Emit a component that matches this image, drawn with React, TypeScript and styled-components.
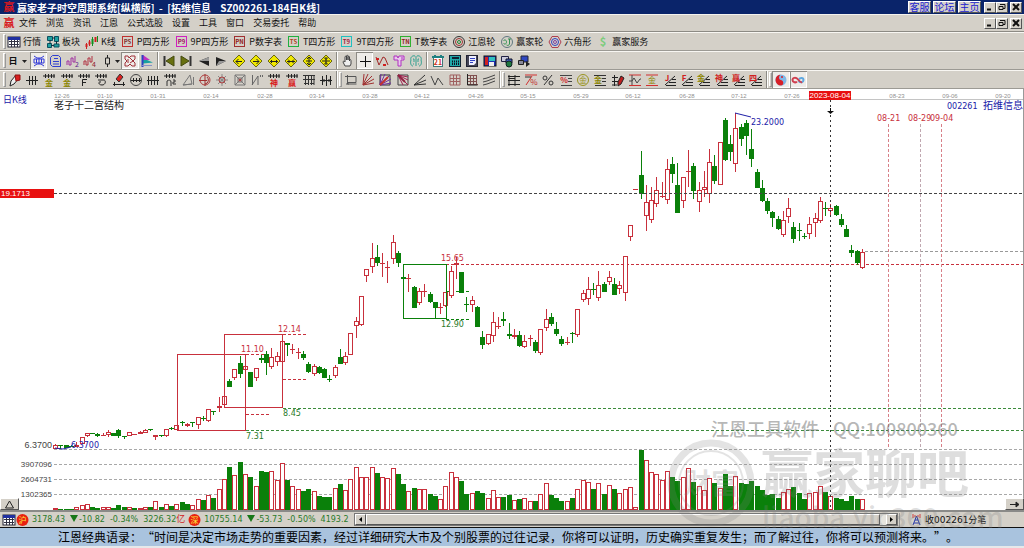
import React from "react";
import styled, { createGlobalStyle, css } from "styled-components";

const UI = '"Noto Sans CJK SC", "Liberation Sans", sans-serif';
const NUM = '"DejaVu Sans", "Noto Sans CJK SC", sans-serif';
const FACE = "#d4d0c8";
const RED = "#c8303c";
const GREEN = "#0a800a";
const BLUE = "#2020a8";

const GlobalStyle = createGlobalStyle`
  * { box-sizing: border-box; }
  body { margin: 0; background: #fff; font-family: ${UI}; color: #111; }
  button { font: inherit; color: inherit; padding: 0; margin: 0; border: 0; background: none; }
`;

const Window = styled.div`
  position: relative;
  width: 100%;
  overflow: hidden;
  background: #e6e8ea;
`;

const TitleBar = styled.header`
  display: flex;
  align-items: center;
  height: 14px;
  padding: 0 2px 0 3px;
  gap: 2px;
  background: #0a246a;
  color: #fff;
`;

const Title = styled.h1`
  flex: 1;
  margin: 0;
  font-size: 10px;
  line-height: 13px;
  font-weight: 700;
  white-space: pre;
`;

const raised = css`
  background: ${FACE};
  border: 1px solid;
  border-color: #fff #555 #555 #fff;
`;

const TitleLink = styled.a`
  ${raised}
  width: 23px;
  height: 12px;
  font-size: 10px;
  line-height: 10px;
  text-align: center;
  text-decoration: none;
  color: #2020d0;
`;

const WindowButtons = styled.div`
  display: flex;
  margin-left: 1px;
`;

const WindowButton = styled.button<{ $apart?: boolean }>`
  ${raised}
  display: flex;
  align-items: center;
  justify-content: center;
  width: 12px;
  height: 11px;
  margin-left: ${(p) => (p.$apart ? 2 : 0)}px;
`;

const MenuBar = styled.nav`
  display: flex;
  align-items: center;
  height: 18px;
  padding: 0 2px 0 3px;
  background: ${FACE};
  border-top: 1px solid #f4f2ee;
  border-bottom: 1px solid #8c8a84;
`;

const MenuItems = styled.div`
  display: flex;
  flex: 1;
  gap: 9px;
  padding-left: 4px;
`;

const MenuItem = styled.button`
  font-size: 9px;
  line-height: 14px;
  white-space: nowrap;
`;

const Toolbar = styled.div`
  display: flex;
  align-items: center;
  height: 19px;
  padding-left: 3px;
  background: ${FACE};
  border-top: 1px solid #f8f6f2;
  border-bottom: 1px solid #9c9a94;
`;

const Grip = styled.span`
  flex: none;
  width: 3px;
  height: 15px;
  border: 1px solid;
  border-color: #fff #999 #999 #fff;
`;

const Divider = styled.span`
  flex: none;
  width: 2px;
  height: 17px;
  margin: 0 1px;
  border-left: 1px solid #8c8a84;
  border-right: 1px solid #fff;
`;

const Group = styled.div<{ $width: number }>`
  display: flex;
  flex: 0 0 ${(p) => p.$width}px;
`;

const ToolButton = styled.button<{ $on?: boolean }>`
  display: flex;
  flex: 1;
  align-items: center;
  justify-content: center;
  height: 17px;
  ${(p) =>
    p.$on &&
    css`
      background: #eeece8;
      box-shadow: inset 1px 1px #8c8a84, inset -1px -1px #fff;
    `}
`;

const PeriodButton = styled.button`
  display: flex;
  align-items: center;
  justify-content: center;
  gap: 4px;
  width: 24px;
  font-size: 9px;
  line-height: 14px;
  font-weight: 700;
`;

const LinkRow = styled.div`
  display: flex;
  gap: 5px;
  padding-left: 1px;
`;

const TextTool = styled.button`
  display: flex;
  align-items: center;
  gap: 2px;
  font-size: 9px;
  line-height: 14px;
  white-space: nowrap;
`;

const ChartArea = styled.main`
  position: relative;
  background: #fff;
  border-bottom: 2px solid #8a8a88;
`;

const ChartSvg = styled.svg`
  display: block;
  width: 100%;
  height: auto;
  font-family: ${NUM};
  font-size: 8px;
`;

const CornerButton = styled.button<{ $side: "left" | "right" }>`
  ${raised}
  position: absolute;
  bottom: 0;
  ${(p) => p.$side}: 0;
  display: flex;
  align-items: center;
  justify-content: center;
  width: 19px;
  height: 12px;
`;

const StatusBar = styled.footer`
  display: flex;
  align-items: center;
  height: 16px;
  padding-left: 2px;
  background: ${FACE};
  border-bottom: 1px solid #111;
`;

const Quotes = styled.div`
  display: flex;
  align-items: center;
  flex: none;
  width: 351px;
  overflow: hidden;
  font-family: ${NUM};
  font-size: 8px;
  line-height: 14px;
  color: #2a7a2a;
  white-space: nowrap;
`;

const Quote = styled.span`
  display: flex;
  align-items: center;
  gap: 5px;
  margin: 0 3px;
`;

const Unit = styled.span`
  font-size: 9px;
  color: #d02020;
`;

const Scroller = styled.div`
  display: flex;
  flex: 1;
  height: 13px;
  margin-left: 1px;
  border: 1px solid #777;
  background: #e6e4de;
`;

const Arrow = styled.button`
  ${raised}
  display: flex;
  align-items: center;
  justify-content: center;
  width: 11px;
`;

const Thumb = styled.div`
  ${raised}
  flex: 1;
  margin-right: 6px;
`;

const TickInfo = styled.div`
  display: flex;
  align-items: center;
  gap: 3px;
  flex: 0 0 125px;
  height: 14px;
  margin-left: 1px;
  padding-left: 11px;
  border-left: 1px solid #999;
  font-family: ${NUM};
  font-size: 9px;
  line-height: 14px;
`;

const Saying = styled.p`
  margin: 0 0 2px;
  padding-left: 58px;
  background: #a9c3de;
  font-size: 12px;
  line-height: 18px;
  color: #000;
  white-space: nowrap;
  text-spacing-trim: space-all;
`;

const Watermark = styled.svg`
  position: absolute;
  right: 0;
  bottom: 10px;
  width: 360px;
  height: 122px;
  pointer-events: none;
  font-family: "Noto Sans CJK SC", sans-serif;
`;

const IconSvg = styled.svg`
  flex: none;
  overflow: visible;
`;

const TrendMark = styled.svg`
  margin-right: 1px;
`;

const Icon = ({ children, w = 14 }: { children?: React.ReactNode; w?: number }) => (
  <IconSvg width={w} height={14} viewBox={`0 0 ${w} 14`} fill="none" stroke="#222" aria-hidden="true">
    {children}
  </IconSvg>
);

const Tiny = ({ x = 7, y = 13, fill = "#222", size = 8, bold, children }: any) => (
  <text x={x} y={y} fill={fill} stroke="none" fontSize={size} fontWeight={bold ? 700 : 400} textAnchor="middle" fontFamily={UI}>
    {children}
  </text>
);

const Boxed = ({ label, edge, ink }: { label: string; edge: string; ink: string }) => (
  <Icon>
    <rect x="1.5" y="1.5" width="10" height="10" stroke={edge} />
    <Tiny x={6.5} y={9} size={6} fill={ink} bold>{label}</Tiny>
  </Icon>
);

const Logo = () => (
  <Icon w={12}>
    <Tiny x={6} y={11} size={11} fill="#d81820" bold>赢</Tiny>
  </Icon>
);

const textTools: [string, React.ReactNode][] = [
  ["行情", <Icon><rect x="1" y="2" width="12" height="10" fill="#fff" stroke="#223" /><path d="M1 3.500h12" stroke="#2030a0" strokeWidth="3" /><path d="M2 6.500h10M2 9.500h10M4.500 5v7M7.500 5v7M10.500 5v7" stroke="#334" /></Icon>],
  ["板块", <Icon><path d="M1.500 1.500h5v4h-5zM8.500 1.500h4v5h-4zM1.500 8.500h4v4h-4zM8 9h5v3H8z" fill="#20a0a0" stroke="#0a5060" /><path d="M4 5v4M6 3h3M10.500 6v3M5 10.500h3" stroke="#103040" /></Icon>],
  ["K线", <Icon><path d="M1.500 8v6M4.500 5v6" stroke="#d02020" /><path d="M1.500 9v3M4.500 6.500v3M10.500 2v5" stroke="#d02020" strokeWidth="2" /><path d="M7.500 4v5" stroke="#109020" strokeWidth="2" /><path d="M7.500 2v9M12.500 1v6" stroke="#109020" /></Icon>],
  ["P四方形", <Boxed label="PS" edge="#c03030" ink="#803030" />],
  ["9P四方形", <Boxed label="P9" edge="#d020c0" ink="#a01060" />],
  ["P数字表", <Boxed label="PN" edge="#a03030" ink="#901818" />],
  ["T四方形", <Boxed label="TS" edge="#20b040" ink="#b04020" />],
  ["9T四方形", <Boxed label="T9" edge="#20c0c0" ink="#a02040" />],
  ["T数字表", <Boxed label="TN" edge="#30b030" ink="#902020" />],
  ["江恩轮", <Icon><circle cx="7" cy="7" r="5.500" stroke="#333" /><circle cx="7" cy="7" r="3.500" stroke="#a03030" /><circle cx="7" cy="7" r="1.500" stroke="#208030" /></Icon>],
  ["赢家轮", <Icon><circle cx="7" cy="7" r="5.500" stroke="#607880" /><path d="M3.500 6c1-2 3-1 3 1s-2 3-3 1M8 4h3M9.500 4v5c0 1-2 2-3 1" stroke="#309050" /></Icon>],
  ["六角形", <Icon><path d="M4 1.500h6l3 5.500-3 5.500H4L1 7z" stroke="#b04050" /><circle cx="7" cy="7" r="3.500" stroke="#3040c0" /><circle cx="7" cy="7" r="1.500" stroke="#8040a0" /></Icon>],
  ["赢家服务", <Icon><Tiny x={7} y={11} size={11} fill="#7ccc7c" bold>$</Tiny></Icon>],
];

const Diamond = ({ d }: { d: string }) => (
  <Icon>
    <path d="M7 1l6 6-6 6-6-6z" fill="#f0e800" stroke="#6a6810" />
    <path d={d} stroke="#222" />
  </Icon>
);

const TriangleDown = () => (
  <Icon w={6}><path d="M0 6h5L2.500 9z" fill="#222" stroke="none" /></Icon>
);

type Tool = [string, React.ReactNode, boolean?];

const viewTools: Tool[] = [
  ["综合视图", <Icon><path d="M2 2l3 2h4l3-2M2 12l3-2h4l3 2M2 5h10v4H2zM4.500 5v4M9.500 5v4M7 4v6" stroke="#3038d8" /></Icon>, true],
  ["资料", <Icon><path d="M3.500 1.500h6l2 2v9h-8l-2-2v-7zM5 4.500h4M4 7.500h6M4 10h6" stroke="#3040d0" /></Icon>],
  ["二线", <Icon><path d="M1 11V7h2v4h2V4h2v4h2V2" stroke="#a030a0" /><Tiny x={11} y={13} size={7} fill="#602090">2</Tiny></Icon>],
  ["四线", <Icon><path d="M1 11V7h2v4h2V4h2v4h2V2" stroke="#b03040" /><Tiny x={11} y={13} size={7} fill="#902030">4</Tiny></Icon>],
  ["单根K线", <Icon><path d="M7.500 1v3M7.500 10v3M5.500 4h4v6h-4z" /></Icon>],
];
const viewTools2: Tool[] = [
  ["形态", <Icon><path d="M2 2h3l1 2 2-2h4v3l-2 2 2 2v3H9L7 10l-2 2H2V9l2-2-2-2zM5 5v4M7 4l3 3-3 2" stroke="#a03038" /></Icon>, true],
  ["分布", <Icon><path d="M3 1l7 5H3z" fill="#c030c0" stroke="none" /><path d="M3 6h4l6 2.500-10 1z" fill="#18a0a0" stroke="none" /><path d="M2.500 1v12" stroke="#3040c0" strokeWidth="2" /><path d="M2 11.500h10" stroke="#8890c8" /></Icon>],
];
const moveTools: Tool[] = [
  ["最左", <Icon><path d="M2.500 2v10" stroke="#333" strokeWidth="2" /><path d="M12 2v10L4 7z" fill="#687010" stroke="#444a10" /></Icon>],
  ["最右", <Icon><path d="M11.500 2v10" stroke="#333" strokeWidth="2" /><path d="M2 2v10l8-5z" fill="#687010" stroke="#444a10" /></Icon>],
  ["向左", <Icon><path d="M12 3v9L2 7z" fill="#222" stroke="none" /><path d="M2 7l10-4v4z" fill="#999" stroke="none" /></Icon>],
  ["向右", <Icon><path d="M2 3v9l10-5z" fill="#222" stroke="none" /><path d="M12 7L2 12l3-5z" fill="#999" stroke="none" /></Icon>],
  ["左移", <Diamond d="M4 7.500h6M6.500 5L4 7.500 6.500 10" />],
  ["右移", <Diamond d="M4 7.500h6M7.500 5L10 7.500 7.500 10" />],
  ["横向拉伸", <Diamond d="M3 7.500h8M5 6L3.500 7.500 5 9M9 6l1.500 1.500L9 9" />],
  ["横向压缩", <Diamond d="M3 7.500h8M4 5.500l2 2-2 2M10 5.500l-2 2 2 2" />],
  ["纵向拉伸", <Diamond d="M7 3v8M5 5l2-2 2 2M5 9l2 2 2-2M4 7h6" />],
  ["纵向压缩", <Diamond d="M7 3v8M5 3.500l2 2 2-2M5 10.500l2-2 2 2M3 7h8" />],
];
const pointerTools: Tool[] = [
  ["拖动", <Icon><path d="M4 12L2 8c0-1 1-1 2 0V3c0-1 1-1 1.500 0v3V2c0-1 1.500-1 1.500 0v4V3c0-1 1.500-1 1.500 0v4c0-2 1.500-2 1.500 0v3l-1 2z" stroke="#444" fill="#eee" /></Icon>],
  ["十字光标", <Icon><path d="M7.500 2v11M2 7.500h11" stroke="#111" /></Icon>, true],
  ["波段", <Icon><path d="M1 3l3 8 4-8 2 1 3 7" stroke="#a02828" /><path d="M1 5h3M8 11h3" stroke="#d02020" strokeWidth="2" /></Icon>],
  ["标记", <Icon><path d="M2 2h3l1 2 1-2h5v4H9v6H6V6H2zM9 4h2" stroke="#b030c0" fill="#e8c8ec" /></Icon>],
  ["智能", <Icon><path d="M7 2v10M6 2C3 1 1 4 2 6c-1 3 0 6 2 6M8 2c3-1 5 2 4 4 1 3 0 6-2 6M4 5h1v3M10 5H9v3M4 10h1M10 10H9" stroke="#30a090" /></Icon>],
];
const utilityTools: Tool[] = [
  ["日历", <Icon><rect x="2.500" y="3.500" width="9" height="9" fill="#fff" stroke="#407878" /><path d="M1 3h12M4 1v2M10 1v2" stroke="#208080" strokeWidth="2" /><Tiny x={7} y={11} size={7} fill="#d03020" bold>21</Tiny></Icon>],
  ["计算器", <Icon><rect x="1.500" y="1.500" width="11" height="11" fill="#20a8a8" stroke="#123" /><path d="M4 4h7" stroke="#123" strokeWidth="2" /><path d="M4 7.500h7M4 10h7" stroke="#112" strokeDasharray="1 1" strokeWidth="2" /></Icon>],
  ["笔记", <Icon><rect x="1.500" y="1.500" width="11" height="11" fill="#445" stroke="#223" /><path d="M4 2h7v7l-2 2H4z" fill="#eef" stroke="none" /><path d="M5 4.500h5M5 6.500h5M5 8.500h3" stroke="#3040c0" /></Icon>],
  ["保存", <Icon><rect x="1" y="2" width="12" height="10" fill="#2030b0" stroke="#111" /><path d="M2 3h3v8H2z" fill="#d02020" stroke="none" /><path d="M6 3h6v4H6z" fill="#30c0c0" stroke="none" /><path d="M6 8h5v4H6z" fill="#eee" stroke="none" /></Icon>],
  ["网络", <Icon><path d="M1.500 2.500h7v5h-7z" fill="#ccd" stroke="#224" /><path d="M6 5h6v4H6z" fill="#4060c0" stroke="#112" /><circle cx="9" cy="10" r="3" fill="#207840" stroke="#122" /></Icon>],
  ["远程", <Icon><path d="M4 2h7v6H4z" fill="#3048c0" stroke="#223" /><path d="M1.500 6.500h5v4h-5z" fill="#889" stroke="#222" /><path d="M9 7l4 3-4 3z" fill="#222" stroke="none" /></Icon>],
];

const Comb = () => <path d="M1 3h12M3.500 1v4M6.500 1v4M9.500 1v4M12 1v4" />;
const Steps = ({ ink, label }: { ink: string; label: string }) => (
  <Icon>
    <path d="M3 12.500h10M6 9.500h7M9 6.500h4M2 12l10-9" />
    <Tiny x={4} y={8} size={8} fill={ink} bold>{label}</Tiny>
  </Icon>
);
const Fan = ({ ink = "#a03030" }: { ink?: string }) => (
  <path d="M2 12L3 1M2 12L7 1M2 12L11 3M2 12l11-6M2 12l11-2" stroke={ink} />
);

const drawTools: Tool[] = [
  ["画笔", <Icon><path d="M3 8l5-6 3 3-5 6-4 2z" fill="#eee" /><path d="M7 2h5v5L8 8z" fill="#d82020" stroke="#901010" /></Icon>],
  ["等距线", <Icon><path d="M1 7.500h12M4.500 3v9M7.500 3v9M10.500 3v9" /></Icon>],
  ["金线一", <Icon><Comb /><Tiny fill="#8a8400" bold>金</Tiny></Icon>],
  ["金线二", <Icon><Comb /><Tiny fill="#8a8400" bold>金</Tiny></Icon>],
  ["F线", <Icon><Comb /><path d="M5.500 13V6.500H10M5.500 9.500H9" /></Icon>],
  ["螺旋", <Icon><Comb /><path d="M4 7h6c2 0 2 5-2 5s-4-4-1-3" /></Icon>],
  ["标尺", <Icon><path d="M4 6l4-5 3 3-4 5z" fill="#d82020" stroke="#333" /><path d="M1 11.500h12M2.500 9v4M11.500 9v4" /></Icon>],
  ["圆周", <Icon><circle cx="7" cy="7" r="5.500" stroke="#444" /><path d="M2 7.500h10M4.500 5v4M7.500 5v4M10.500 5v4" /></Icon>],
  ["密线", <Icon><path d="M1 7.500h12M2.500 3v9M5.500 3v9M8.500 3v9M11.500 3v9" /></Icon>],
  ["平方", <Icon><Comb /><path d="M4 13V8c2-1.500 4-1 4 1v4M10 7h2v2h-2v2h3" stroke="#333" /></Icon>],
  ["三角", <Icon><path d="M2 12L9 2l2 9zM2 12l9-1M12.500 4v8" stroke="#777" /></Icon>],
  ["圆十字", <Icon><circle cx="7" cy="7" r="5" stroke="#b04040" /><path d="M7 1v12M1 7.500h8M9 4a4 4 0 0 1-2 7" stroke="#a03030" /></Icon>],
  ["八方", <Icon><path d="M7 1v12M1 7h12M3 3l8 8M11 3l-8 8" stroke="#888" /><circle cx="7" cy="7" r="3" stroke="#b04040" /></Icon>],
  ["方阵", <Icon><path d="M2 2h10v10H2zM2 2l10 10M12 2L2 12M5 5h4v4H5z" stroke="#777" /><circle cx="7" cy="7" r="1" stroke="#b04040" /></Icon>],
  ["折线", <Icon><path d="M2.500 2v10M2 12l6-9v9M10.500 2v2M12.500 2v2" stroke="#666" /></Icon>],
  ["神线", <Icon><Comb /><Tiny fill="#d81818" bold>神</Tiny></Icon>],
  ["赢线", <Icon><Comb /><Tiny fill="#d81818" bold>赢</Tiny></Icon>],
  ["网格", <Icon><path d="M1 2.500h12M1 6.500h12M3.500 2v10M6.500 2v10M9.500 2v10M12 2v10M2 10.500h4M8 10.500h4" stroke="#333" /></Icon>],
  ["间隔", <Icon><path d="M1 7.500h12M3.500 3v9M7.500 2v11M11.500 3v9M5 6v3M10 6v3" /></Icon>],
];
const shapeTools: Tool[] = [
  ["矩形", <Icon><path d="M3.500 2v9h9M1 3.500h11v6H4M2 11h3" stroke="#555" /></Icon>],
  ["扇形", <Icon><Fan /></Icon>],
  ["扇形方块", <Icon><path d="M2 2h10v10H2z" stroke="#333" /><Fan ink="#7030a0" /><path d="M2 12l8-8" stroke="#c03030" strokeWidth="2" /></Icon>],
  ["反扇", <Icon><path d="M2 2h10v10H2z" stroke="#444" /><path d="M2 2l10 10M2 2l5 10M2 2l10 5M2 2l10 2" stroke="#a02050" /><path d="M2 2l7 7" stroke="#902040" strokeWidth="2" /></Icon>],
  ["速度线", <Icon><path d="M1 12L12 2M1 12l12-5M1 12l12-1" stroke="#333" /></Icon>],
  ["V形", <Icon><path d="M1 3l4 9 3-7 5 7" stroke="#444" /></Icon>],
  ["方格", <Icon><path d="M2 2h10v10H2zM2 5.500h10M2 8.500h10M5.500 2v10M8.500 2v10" stroke="#a06060" /></Icon>],
  ["方格二", <Icon><path d="M2.500 1v11M2 2.500h10M2 5.500h10M2 8.500h10M2 11.500h11M5.500 2v10M8.500 2v10M11.500 2v10" stroke="#805050" /><path d="M2.500 1v11h10" /></Icon>],
  ["平行线", <Icon><path d="M1 6l4-1 8-3M1 9l4-1 8-3M1 12l4-1 8-3" stroke="#444" /></Icon>],
];
const ratioTools: Tool[] = [
  ["分割", <Icon><path d="M2 2v11M1 3.500h12M1 7.500h12M1 11.500h12M8 2v11" /><path d="M2 5.500h6" /></Icon>],
  ["斜百分比", <Icon><path d="M1 2h12M2 12l6-9" stroke="#d03030" /><path d="M1 4h6" stroke="#333" /><Tiny x={10} y={12} size={8} fill="#c02828">%</Tiny></Icon>],
  ["百分比", <Icon><path d="M11 2L3 12" stroke="#333" /><circle cx="4" cy="5" r="2" stroke="#333" /><circle cx="10" cy="10" r="2" stroke="#333" /></Icon>],
  ["百分比线", <Icon><path d="M1 2.500h12M9 5.500h4M9 8.500h4M2 12.500h11" stroke="#444" /><Tiny x={5} y={10} size={8} fill="#d02828" bold>%</Tiny></Icon>],
  ["金圆", <Icon><circle cx="7" cy="7" r="5.500" stroke="#9a9420" /><Tiny y={10} fill="#9a9420">金</Tiny></Icon>],
  ["金分割", <Icon><path d="M1 2.500h12M9 5.500h4M9 8.500h4M2 12.500h11" stroke="#333" /><Tiny x={5} y={10} fill="#8a8400" bold>金</Tiny></Icon>],
  ["画线", <Icon><path d="M3.500 2v11M1 4.500h6M1 8.500h6M1 12h5" /><path d="M7 9l3-6 3 2-3 6-3 2z" fill="#c02020" stroke="#222" /></Icon>],
  ["波动", <Icon><path d="M1 2h12M1 12.500h12" stroke="#d03030" /><path d="M1 8h3l2-3 3 5 3-4h1M4 2v10" stroke="#444" /></Icon>],
  ["金波", <Icon><path d="M1 2h12M1 12.500h12" stroke="#d03030" /><Tiny y={10} fill="#8a8400">金</Tiny></Icon>],
  ["J阶", <Steps ink="#d02020" label="J" />],
  ["F阶", <Steps ink="#d02020" label="F" />],
  ["金阶", <Steps ink="#8a8400" label="金" />],
  ["神阶", <Steps ink="#d02020" label="神" />],
  ["赢阶", <Steps ink="#d02020" label="赢" />],
  ["四阶", <Steps ink="#d02020" label="四" />],
];
const modeTools: Tool[] = [
  ["太极", <Icon><circle cx="7" cy="7" r="5.500" fill="#80b8e8" stroke="none" /><path d="M7 1.500a5.500 5.500 0 0 0 0 11c3 0 3-5 0-5.500s-2-5 0-5.500z" fill="#d82028" stroke="none" /><circle cx="8" cy="4" r="1" fill="#d82028" stroke="none" /></Icon>, true],
  ["循环", <Icon><path d="M8 6.500c1-2 4.500-2 4.500.5s-3 3-5 1" stroke="#60a8e0" strokeWidth="2" /><path d="M6 8.500c-1 1.500-4.500 1-4.500-1.500S5 4 7 6.500 10 9.500 11 9" stroke="#d04050" strokeWidth="2" /></Icon>, true],
];

const Tools = ({ items, width }: { items: Tool[]; width: number }) => (
  <Group $width={width}>
    {items.map(([name, icon, on]) => (
      <ToolButton key={name} aria-label={name} aria-pressed={on} $on={on}>
        {icon}
      </ToolButton>
    ))}
  </Group>
);

/* Candles: colour, then high, body top, body bottom, low; three units to a pixel, measured down from `top`. */
const candleRuns = [
  {
    top: 320,
    rows: "r372,374,386,388 g376,376,379,386 g376,376,383,383 g376,377,380,382 r367,374,382,382 r351,351,371,371 r338,338,347,350 g340,340,342,342 g340,343,347,350 r340,345,347,348 r331,337,345,350 g338,340,347,347 g326,331,348,354 g347,349,352,356 r337,337,349,349 r341,341,343,344 r332,337,341,342 r327,330,340,340 g327,328,330,332 r345,345,352,359 g346,346,348,350 r328,328,347,350 g321,325,328,330 r314,314,329,329 g303,306,309,318 r309,312,318,322 g306,306,310,322 r292,292,315,326 g288,294,297,304 r266,268,304,306 g274,274,277,286 r230,258,263,277 r229,229,255,262 g177,183,200,200 r146,146,173,181 g108,130,161,173 r105,139,149,149 g155,155,200,200 r145,145,175,182 g104,115,120,130 g94,103,128,164 r83,112,142,146 r95,108,125,138 r55,64,127,130 g68,70,74,107 r72,86,88,103 r84,96,98,116 g92,102,115,120 g127,133,157,158 r133,137,161,167 g138,142,158,162 g145,147,173,173 g166,177,179,186 r135,142,169,173",
  },
  {
    top: 220,
    rows: "g386,411,433,433 r397,407,428,434 r338,340,406,406 r290,304,318,353 r229,229,314,318 r146,146,169,185 r69,115,142,160 g74,112,130,138 r100,130,132,170 r123,141,144,188 r46,67,118,133 g93,99,130,142 g171,172,177,178 r162,175,177,215 g198,200,263,263 r203,213,250,254 r191,213,216,230 g215,222,247,250 g245,247,264,296 r250,260,265,283 r217,217,257,262 r138,154,229,235 r112,129,136,177 g157,157,220,220 g232,252,255,276 r228,239,256,276 g258,262,321,321 g333,351,374,386 r343,343,373,374 r276,305,349,367 r290,317,322,328 g276,297,302,318 g310,342,347,356 r328,346,352,358 g334,345,377,382 r346,364,382,385 r346,354,356,378 g360,367,392,400 r328,328,400,404 r268,296,325,332 g280,291,311,318 g305,327,341,348 g348,356,371,378 r350,366,368,375 g336,340,342,369 r268,268,344,352 r210,220,241,246 r171,208,238,256 g190,207,211,225 r153,196,235,242 g185,193,215,215 r152,172,187,196 g175,192,226,226 r184,196,208,222 r109,109,220,242 r14,14,50,62",
  },
  {
    top: 100,
    rows: "r268,268,270,270 g154,224,283,298 r254,307,349,392 r262,301,361,370 r232,271,313,322 r245,287,292,293 r176,206,301,313 g170,193,222,248 g190,256,338,338 r230,232,304,325 r149,214,217,260 g190,199,272,297 r245,271,307,336 r214,262,269,290 r148,187,283,308 g164,199,242,252 r125,125,254,255 g54,61,179,183 g106,133,157,182 r40,85,193,217 g73,82,116,138 g61,70,109,166 g88,148,177,200 g208,215,263,265 g241,263,302,305 g294,303,333,342 g333,335,354,380 g349,358,388,390 r334,361,406,412 r294,325,350,368 g366,380,416,430 g368,391,393,422 g398,408,410,416 r350,373,403,418 r340,355,370,410 r292,304,362,370 g305,325,327,348 r312,325,334,346 g314,318,344,348 g343,358,376,382 g374,388,410,412 g436,450,459,472 g451,454,490,496 r448,455,505,506",
  },
];

/* Traded volume per session, in thirds of a pixel above the floor of the panel. */
const volumes =
  "r6 g3 g3 g3 r9 r14 r17 g9 g7 r8 r9 g6 g14 g9 r9 g6 r7 r9 g9 r27 g9 r19 g12 r18 g24 g18 r15 r33 g31 r45 g37 r63 r93 g130 r105 g145 r109 g100 r73 g118 g115 r118 r90 r141 g91 r73 r63 g58 g64 r57 g43 g38 g38 r66 g79 " +
  "r60 r93 r129 r99 r99 r129 g111 r99 r97 r127 g109 g78 r58 g66 r63 r63 g49 g42 r33 r72 r114 r100 g87 g49 r51 g58 g52 r37 r60 r39 g40 g44 r30 g33 r36 r27 g26 r48 r81 g46 g35 g28 r27 g37 r63 r90 r85 g64 r81 g49 r75 g62 r51 r64 r69 r9 g180 r150 r114 r109 r90 r117 g100 g87 " +
  "r99 r126 g85 r72 r61 r96 g82 r66 g109 g73 r102 g82 g79 g87 g73 g61 g46 g48 g35 r54 r63 g70 g51 g33 r51 r53 r72 g55 r42 g37 g33 g28 g42 g32 r33";

const candles = candleRuns.flatMap(({ top, rows }) =>
  rows.split(" ").map((row) => ({
    up: row[0] === "r",
    y: row.slice(1).split(",").map((v) => top + Math.round(Number(v) / 3)),
  }))
);

const barX = (i: number) => Math.round(53.2 + i * 5.273);

const Candles = () => (
  <g shapeRendering="crispEdges">
    {candles.map(({ up, y: [hi, a, b, lo] }, i) => {
      const x = barX(i);
      const h = Math.max(b - a, 1);
      const ink = up ? RED : GREEN;
      return (
        <g key={i} fill={ink}>
          <rect x={x + 2} y={hi} width={1} height={Math.max(a - hi, 0)} />
          <rect x={x + 2} y={b} width={1} height={Math.max(lo - b, 0)} />
          {up && h > 2 ? (
            <rect x={x + 0.5} y={a + 0.5} width={4} height={h - 1} fill="#fff" stroke={ink} />
          ) : (
            <rect x={x} y={a} width={5} height={h} />
          )}
        </g>
      );
    })}
  </g>
);

const Volumes = () => (
  <g shapeRendering="crispEdges">
    {volumes.split(" ").map((v, i) => {
      const h = Math.max(Math.round(Number(v.slice(1)) / 3), 1);
      const x = barX(i);
      return v[0] === "r" && h > 1 ? (
        <rect key={i} x={x + 0.5} y={510.5 - h} width={4} height={h - 1} fill="#fff" stroke={RED} />
      ) : (
        <rect key={i} x={x} y={510 - h} width={5} height={h} fill={v[0] === "r" ? RED : GREEN} />
      );
    })}
  </g>
);

const dates: [number, string][] = [
  [62, "12-26"], [105, "01-10"], [158, "01-31"], [211, "02-14"], [265, "02-28"], [317, "03-14"], [370, "03-28"],
  [422, "04-12"], [476, "04-26"], [528, "05-15"], [581, "05-29"], [633, "06-12"], [687, "06-28"], [739, "07-12"],
  [792, "07-26"], [897, "08-23"], [950, "09-06"], [1003, "09-20"],
];

const Chart = () => (
  <ChartSvg viewBox="0 89 1024 421" role="img" aria-label="拓维信息 日K线">
    <g fill="#909090" fontSize="6" fontFamily="Liberation Sans, sans-serif" textAnchor="middle">
      {dates.map(([x, d]) => (
        <text key={d} x={x} y={98}>{d}</text>
      ))}
    </g>
    <path d="M54 99.500H1023" stroke="#c4c4c4" />
    <path d="M1023.500 89V510" stroke="#999" />

    <g strokeDasharray="3 2" stroke="#a8a8a8" shapeRendering="crispEdges">
      <path d="M54 449.500H1023" />
      <path d="M54 464.500H1023" />
      <path d="M54 479.500H1023" />
      <path d="M54 494.500H1023" />
      <path d="M283 408.500H1023M246 430.500H1023" stroke="#3c8c3c" />
      <path d="M446 264.500H1023" stroke={RED} />
      <path d="M865 251.500H1023" stroke="#999" />
      <path d="M246 354.500H272M283 334.500H308M283 379.500H308M246 414.500H271" stroke={RED} />
      <path d="M446 291.500H471M446 319.500H471" stroke={GREEN} />
      <path d="M888.500 124V447M941.500 124V447" stroke="#d88088" />
      <path d="M920.500 124V447" stroke="#c0a8b0" />
    </g>

    <Volumes />
    <Candles />

    <g fill="none" shapeRendering="crispEdges">
      <path d="M177.500 354.500H245.500V430.500H177.500zM224.500 334.500H282.500V407.500H224.500z" stroke={RED} />
      <path d="M403.500 264.500H446.500V318.500H403.500z" stroke={GREEN} />
      <path d="M54 193.500H1023" stroke="#444" strokeDasharray="3 2" />
      <path d="M830.500 100V510" stroke="#333" strokeDasharray="2 3" />
    </g>
    <path d="M735 113l16 4M55 448l8 1 8-2" stroke={BLUE} fill="none" />
    <path d="M827 111h7l-3.500 3zM830 108h1v4h-1z" fill="#111" />

    <g fill={RED}>
      <text x="241" y="352">11.10</text>
      <text x="278" y="332">12.14</text>
      <text x="441" y="261">15.65</text>
      <text x="877" y="121">08-21</text>
      <text x="908" y="121">08-29</text>
      <text x="930" y="121">09-04</text>
    </g>
    <g fill="#2a7a2a">
      <text x="283" y="416">8.45</text>
      <text x="246" y="439">7.31</text>
      <text x="441" y="327">12.90</text>
    </g>
    <g fill={BLUE}>
      <text x="751" y="125">23.2000</text>
      <text x="71" y="448">6.3700</text>
      <text x="947" y="109">002261</text>
      <text x="1023" y="109" fontSize="10" textAnchor="end">拓维信息</text>
      <text x="3" y="103" fontSize="9" fontFamily={UI}>日K线</text>
    </g>
    <text x="54" y="109" fontSize="10" fill="#222">老子十二宫结构</text>
    <g fill="#444" textAnchor="end" fontFamily="Liberation Sans, sans-serif">
      <text x="52" y="448" fontSize="9">6.3700</text>
      <text x="52" y="467">3907096</text>
      <text x="52" y="482">2604731</text>
      <text x="52" y="497">1302365</text>
    </g>
    <path d="M0 189h54v9H0z" fill="#e81010" />
    <path d="M809 91h42v9h-42z" fill="#e81010" />
    <g fill="#fff" fontFamily="Liberation Sans, sans-serif">
      <text x="1" y="196">19.1713</text>
      <text x="830" y="98" textAnchor="middle">2023-08-04</text>
    </g>
  </ChartSvg>
);

const marks: Record<string, string> = {
  min: "M1 6.500h4",
  restore: "M2 1.500h5v4H5M1 3.500h4v3H1z",
  close: "M1 1l6 6M7 1L1 7",
};

const Controls = () => (
  <WindowButtons>
    {[["min", "最小化"], ["restore", "还原"], ["close", "关闭"]].map(([id, name]) => (
      <WindowButton key={id} aria-label={name} $apart={id === "close"}>
        <svg width="8" height="8" viewBox="0 0 8 8" fill="none" stroke="#111" aria-hidden="true">
          <path d={marks[id]} strokeWidth={id === "restore" ? 1 : 2} />
        </svg>
      </WindowButton>
    ))}
  </WindowButtons>
);

const Badge = ({ children }: { children: string }) => (
  <IconSvg width="13" height="14" viewBox="0 0 13 14" aria-hidden="true">
    <circle cx="6.500" cy="7" r="6" fill="#e82010" />
    <text x="6.500" y="10" fontSize="8" fill="#ffe840" textAnchor="middle" fontFamily={UI}>{children}</text>
  </IconSvg>
);

const Down = () => (
  <TrendMark width="8" height="7" viewBox="0 0 8 7" aria-hidden="true"><path d="M0 0h8L4 7z" fill="#187818" /></TrendMark>
);

const menu = ["文件", "浏览", "资讯", "江恩", "公式选股", "设置", "工具", "窗口", "交易委托", "帮助"];

export default function App() {
  return (
    <Window>
      <GlobalStyle />
      <TitleBar>
        <Logo />
        <Title>{"赢家老子时空周期系统[纵横版]  -  [拓维信息    SZ002261-184日K线]"}</Title>
        {["客服", "论坛", "主页"].map((t) => (
          <TitleLink key={t} href="#">{t}</TitleLink>
        ))}
        <Controls />
      </TitleBar>
      <MenuBar>
        <Logo />
        <MenuItems>
          {menu.map((m) => (
            <MenuItem key={m}>{m}</MenuItem>
          ))}
        </MenuItems>
        <Controls />
      </MenuBar>
      <Toolbar>
        <Grip />
        <LinkRow>
          {textTools.map(([name, icon]) => (
            <TextTool key={name}>{icon}{name}</TextTool>
          ))}
        </LinkRow>
      </Toolbar>
      <Toolbar>
        <Grip />
        <PeriodButton>日<TriangleDown /></PeriodButton>
        <Tools items={viewTools} width={85} />
        <TriangleDown />
        <Tools items={viewTools2} width={35} />
        <Divider />
        <Tools items={moveTools} width={175} />
        <Divider />
        <Tools items={pointerTools} width={86} />
        <Divider />
        <Tools items={utilityTools} width={104} />
      </Toolbar>
      <Toolbar>
        <Grip />
        <Tools items={drawTools} width={329} />
        <Divider />
        <Grip />
        <Tools items={shapeTools} width={156} />
        <Divider />
        <Grip />
        <Tools items={ratioTools} width={260} />
        <Divider />
        <Grip />
        <Tools items={modeTools} width={35} />
      </Toolbar>
      <ChartArea>
        <Chart />
        <CornerButton $side="left" aria-label="展开">
          <svg width="11" height="9" viewBox="0 0 11 9" aria-hidden="true"><path d="M5.500 1l4 7h-8z" fill="none" stroke="#222" /></svg>
        </CornerButton>
        <CornerButton $side="right" aria-label="下一页">
          <svg width="11" height="9" viewBox="0 0 11 9" aria-hidden="true"><path d="M1 4.500h7M7 2l3 2.500L7 7z" fill="#222" stroke="#222" /></svg>
        </CornerButton>
      </ChartArea>
      <StatusBar>
        <Quotes>
          {textTools[0][1]}
          <Badge>沪</Badge>
          <Quote>
            <span>3178.43</span>
            <span><Down />-10.82</span>
            <span>-0.34%</span>
            <span>3226.32<Unit>亿</Unit></span>
          </Quote>
          <Badge>深</Badge>
          <Quote>
            <span>10755.14</span>
            <span><Down />-53.73</span>
            <span>-0.50%</span>
            <span>4193.2</span>
          </Quote>
        </Quotes>
        <Scroller>
          <Arrow aria-label="向左滚动">
            <svg width="5" height="7" viewBox="0 0 5 7" aria-hidden="true"><path d="M4 1v5L1 3.500z" /></svg>
          </Arrow>
          <Thumb />
          <Arrow aria-label="向右滚动">
            <svg width="5" height="7" viewBox="0 0 5 7" aria-hidden="true"><path d="M1 1v5l3-2.500z" /></svg>
          </Arrow>
        </Scroller>
        <TickInfo>
          <svg width="11" height="13" viewBox="0 0 11 13" fill="none" stroke="#2838a8" aria-hidden="true">
            <path d="M5.500 3L2 12M5.500 3L9 12M4 7h3M3 10h5" />
            <path d="M2 1v4M9 1v4M4 2v2M7 2v2" stroke="#d04040" />
          </svg>
          收002261分笔
        </TickInfo>
      </StatusBar>
      <Saying>
        江恩经典语录：“时间是决定市场走势的重要因素，经过详细研究大市及个别股票的过往记录，你将可以证明，历史确实重复发生；而了解过往，你将可以预测将来。”。
      </Saying>
      <Watermark viewBox="664 416 360 122" aria-hidden="true">
        <g fill="#707070" fillOpacity="0.5" fontSize="18" fontWeight="500">
          <text x="711" y="436">江恩工具软件</text>
          <text x="833" y="436">QQ:100800360</text>
        </g>
        <g fill="#808080" fillOpacity="0.26">
          <text x="761" y="493" fontSize="52" fontWeight="700">赢家聊吧</text>
          <text x="762" y="528" fontSize="28" fontWeight="500">liaoba.yic360.com</text>
          <text x="711" y="494" fontSize="28" fontWeight="700" textAnchor="middle">财富</text>
        </g>
        <g fill="none" stroke="#808080" strokeOpacity="0.22">
          <circle cx="711" cy="483" r="40" strokeWidth="7" />
          <circle cx="711" cy="483" r="32" strokeWidth="2" />
        </g>
      </Watermark>
    </Window>
  );
}
